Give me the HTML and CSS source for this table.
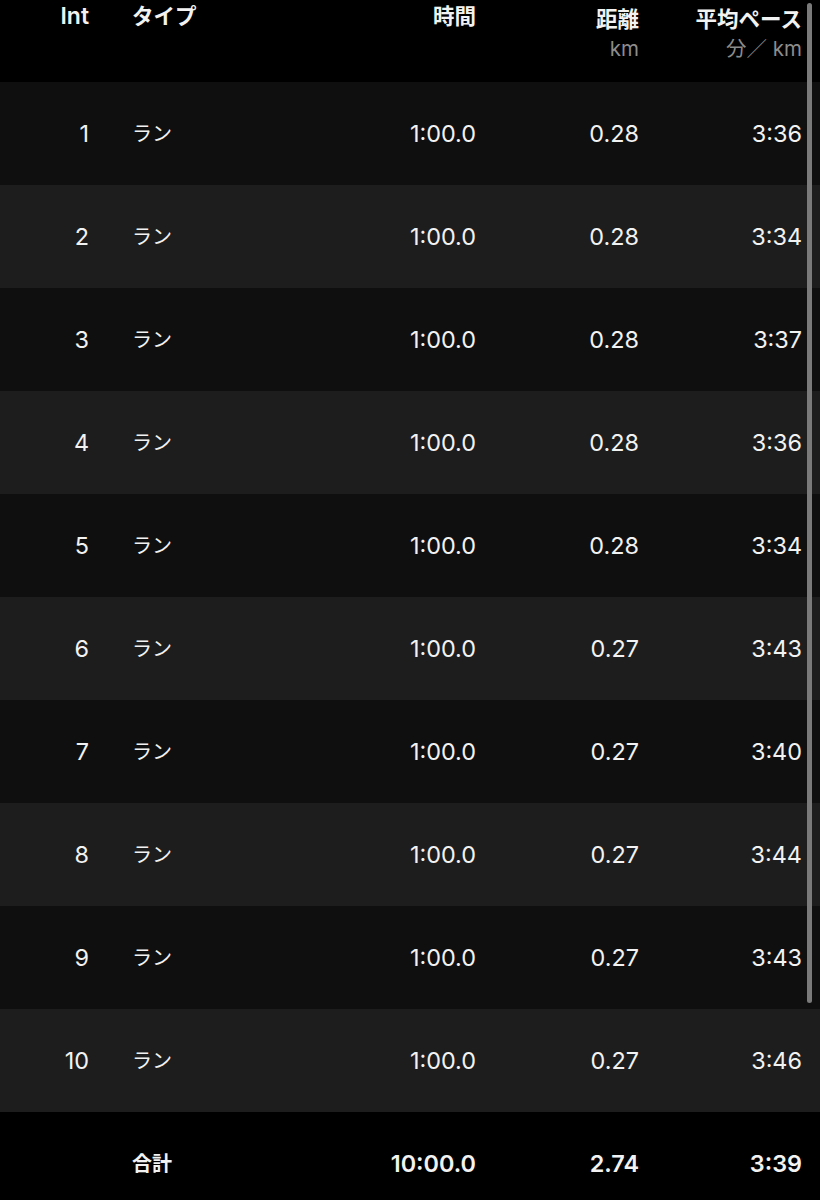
FILE: index.html
```html
<!DOCTYPE html>
<html lang="ja">
<head>
<meta charset="utf-8">
<link rel="stylesheet" href="styles.css">
</head>
<body>
<div class="screen">
  <div class="table">
    <div class="row head">
      <div class="c int">Int</div>
      <div class="c type">タイプ</div>
      <div class="c time">時間</div>
      <div class="c dist low"><span>距離</span><span class="unit">km</span></div>
      <div class="c pace low"><span>平均ペース</span><span class="unit">分／ km</span></div>
    </div>
    <div class="row odd"><div class="c int">1</div><div class="c type">ラン</div><div class="c time">1:00.0</div><div class="c dist">0.28</div><div class="c pace">3:36</div></div>
    <div class="row even"><div class="c int">2</div><div class="c type">ラン</div><div class="c time">1:00.0</div><div class="c dist">0.28</div><div class="c pace">3:34</div></div>
    <div class="row odd"><div class="c int">3</div><div class="c type">ラン</div><div class="c time">1:00.0</div><div class="c dist">0.28</div><div class="c pace">3:37</div></div>
    <div class="row even"><div class="c int">4</div><div class="c type">ラン</div><div class="c time">1:00.0</div><div class="c dist">0.28</div><div class="c pace">3:36</div></div>
    <div class="row odd"><div class="c int">5</div><div class="c type">ラン</div><div class="c time">1:00.0</div><div class="c dist">0.28</div><div class="c pace">3:34</div></div>
    <div class="row even"><div class="c int">6</div><div class="c type">ラン</div><div class="c time">1:00.0</div><div class="c dist">0.27</div><div class="c pace">3:43</div></div>
    <div class="row odd"><div class="c int">7</div><div class="c type">ラン</div><div class="c time">1:00.0</div><div class="c dist">0.27</div><div class="c pace">3:40</div></div>
    <div class="row even"><div class="c int">8</div><div class="c type">ラン</div><div class="c time">1:00.0</div><div class="c dist">0.27</div><div class="c pace">3:44</div></div>
    <div class="row odd"><div class="c int">9</div><div class="c type">ラン</div><div class="c time">1:00.0</div><div class="c dist">0.27</div><div class="c pace">3:43</div></div>
    <div class="row even"><div class="c int">10</div><div class="c type">ラン</div><div class="c time">1:00.0</div><div class="c dist">0.27</div><div class="c pace">3:46</div></div>
    <div class="row total"><div class="c int"></div><div class="c type">合計</div><div class="c time">10:00.0</div><div class="c dist">2.74</div><div class="c pace">3:39</div></div>
  </div>
  <div class="scrollbar"></div>
</div>
</body>
</html>
```

FILE: styles.css
```css
html, body {
  margin: 0;
  padding: 0;
  background: #000;
}
body {
  font-family: Inter, "Noto Sans CJK JP", sans-serif;
  color: #f2f2f2;
  font-size: 23.4px;
}
.screen {
  position: relative;
  width: 820px;
  height: 1200px;
  overflow: hidden;
}
.table {
  display: flex;
  flex-direction: column;
}
.row {
  display: grid;
  grid-template-columns: 89px 267px 120px 163px 163px;
  padding-right: 18px;
  height: 103px;
  flex-shrink: 0;
  align-items: center;
}
.row.odd { background: #0f0f0f; }
.row.even { background: #1d1d1d; }
.row.head {
  height: 82px;
  background: #000;
  align-items: start;
  font-weight: 600;
  font-size: 21.5px;
}
.row.total {
  background: #000;
  font-weight: 600;
}
.c { white-space: nowrap; line-height: 1; }
.int { text-align: right; }
.type { padding-left: 43px; font-size: 20px; }
.time, .dist, .pace { text-align: right; }
.head .c { padding-top: 6px; }
.head .type { font-size: 21.5px; }
.head .int { font-size: 23px; padding-top: 5px; }
.head .low {
  padding-top: 9px;
  display: flex;
  flex-direction: column;
  align-items: flex-end;
}
.unit {
  font-weight: 400;
  color: #8c8c8c;
  font-size: 20.5px;
  margin-top: 8px;
}
.scrollbar {
  position: absolute;
  left: 807px;
  top: 3px;
  width: 5px;
  height: 1000px;
  border-radius: 3px;
  background: #7a7a7a;
}
```
